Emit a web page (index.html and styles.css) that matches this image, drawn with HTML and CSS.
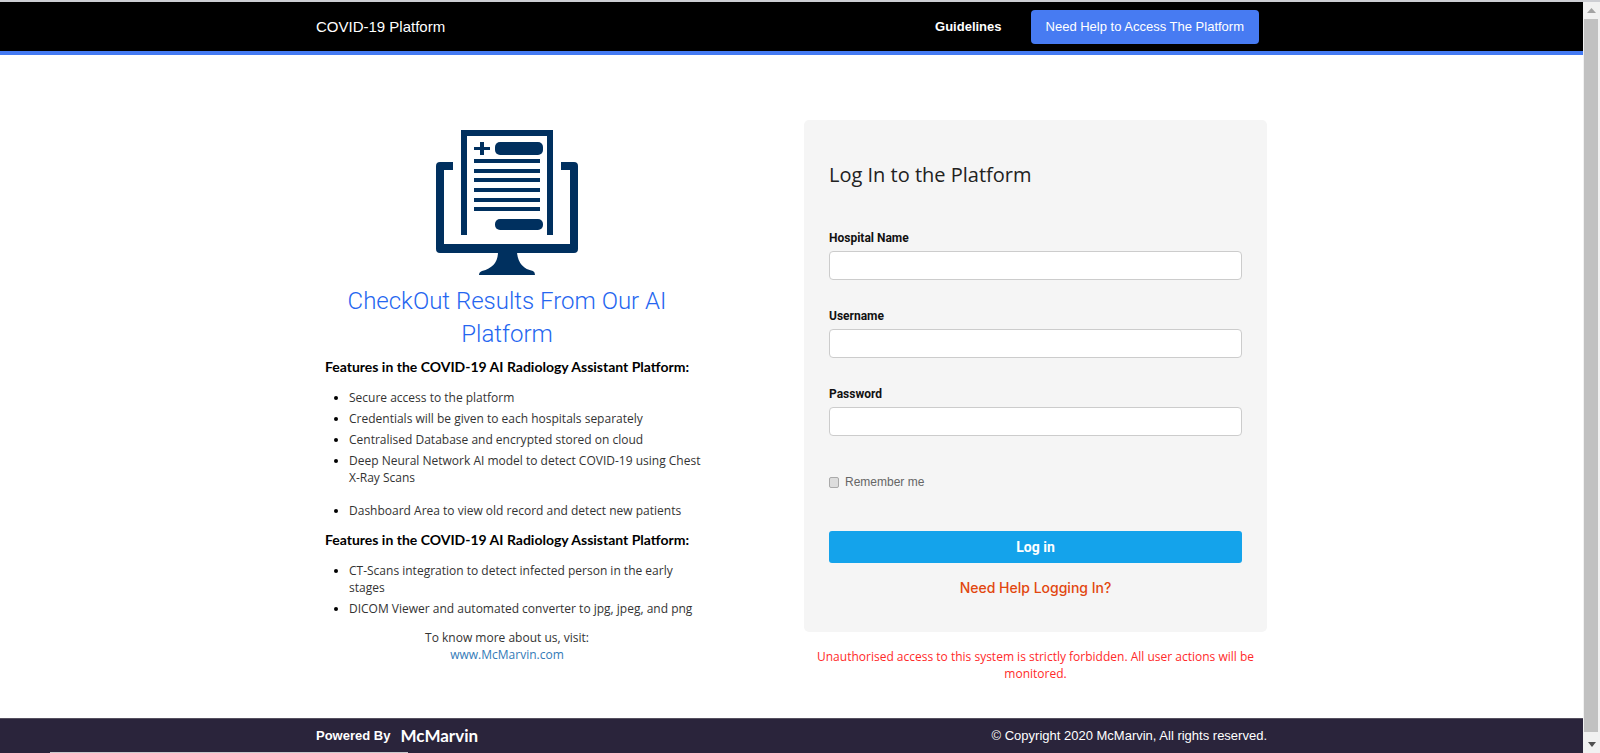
FILE: index.html
```html
<!DOCTYPE html>
<html lang="en">
<head>
<meta charset="utf-8">
<meta name="viewport" content="width=device-width, initial-scale=1">
<title>COVID-19 Platform</title>
<link rel="stylesheet" href="styles.css">
</head>
<body>
<div class="shell">
  <div class="page">
    <header class="header">
      <div class="container bar">
        <a class="brand" href="#">COVID-19 Platform</a>
        <nav class="nav">
          <a class="nav-link" href="#">Guidelines</a>
          <a class="nav-button" href="#">Need Help to Access The Platform</a>
        </nav>
      </div>
    </header>
    <main class="container columns">
      <section class="intro">
        <svg class="monitor" viewBox="0 0 142 145" width="142" height="145" aria-hidden="true">
          <g fill="#00305f">
            <path d="M17 32v8H8v74h126V40h-9v-8h13q4 0 4 4v83q0 4-4 4H4q-4 0-4-4V36q0-4 4-4z"/>
            <path d="M25 0h92v105h-6V6H31v99h-6z"/>
            <path d="M44 12h4v5h6v3h-6v5h-4v-5h-6v-3h6z"/>
            <rect x="59" y="12" width="48" height="13" rx="5"/>
            <rect x="38" y="29" width="66" height="4"/>
            <rect x="38" y="39" width="66" height="4"/>
            <rect x="38" y="48" width="66" height="4"/>
            <rect x="38" y="58" width="66" height="4"/>
            <rect x="38" y="68" width="66" height="4"/>
            <rect x="38" y="77" width="66" height="4"/>
            <rect x="59" y="89" width="48" height="11" rx="5"/>
            <path d="M62 122h19q1 16 16 19q2 1 2 4H43q0-3 3-4q16-4 16-19z"/>
          </g>
        </svg>
        <h1 class="title">CheckOut Results From Our AI Platform</h1>
        <h2 class="subtitle">Features in the COVID-19 AI Radiology Assistant Platform:</h2>
        <ul class="features">
          <li>Secure access to the platform</li>
          <li>Credentials will be given to each hospitals separately</li>
          <li>Centralised Database and encrypted stored on cloud</li>
          <li class="spaced">Deep Neural Network AI model to detect COVID-19 using Chest X-Ray Scans</li>
          <li>Dashboard Area to view old record and detect new patients</li>
        </ul>
        <h2 class="subtitle">Features in the COVID-19 AI Radiology Assistant Platform:</h2>
        <ul class="features">
          <li>CT-Scans integration to detect infected person in the early stages</li>
          <li>DICOM Viewer and automated converter to jpg, jpeg, and png</li>
        </ul>
        <p class="more">To know more about us, visit:<br><a href="#">www.McMarvin.com</a></p>
      </section>
      <section class="login">
        <form class="card">
          <h2 class="card-title">Log In to the Platform</h2>
          <div class="field">
            <label for="hospital">Hospital Name</label>
            <input id="hospital" type="text">
          </div>
          <div class="field">
            <label for="username">Username</label>
            <input id="username" type="text">
          </div>
          <div class="field">
            <label for="password">Password</label>
            <input id="password" type="password">
          </div>
          <div class="remember">
            <input id="remember" type="checkbox">
            <label for="remember">Remember me</label>
          </div>
          <button class="submit" type="button">Log in</button>
          <a class="help" href="#">Need Help Logging In?</a>
        </form>
        <p class="warning">Unauthorised access to this system is strictly forbidden. All user actions will be monitored.</p>
      </section>
    </main>
    <footer class="footer">
      <div class="container bar">
        <p class="powered">Powered By <span class="logo">McMarvin</span></p>
        <p class="copyright">© Copyright 2020 McMarvin, All rights reserved.</p>
      </div>
    </footer>
  </div>
  <div class="scrollbar" aria-hidden="true">
    <svg viewBox="0 0 17 17" width="17" height="17"><path d="M4 11l4.500-5l4.500 5z" fill="#a3a3a3"/></svg>
    <div class="thumb"></div>
    <svg viewBox="0 0 17 17" width="17" height="17"><path d="M5 6h8l-4 5z" fill="#505050"/></svg>
  </div>
</div>
</body>
</html>
```
FILE: styles.css
```css
* { box-sizing: border-box; }
body {
  margin: 0;
  background: #fff;
  color: #333;
  font-family: "Open Sans", sans-serif;
  font-size: 12px;
  line-height: 17px;
}
h1, h2, p, ul { margin: 0; padding: 0; }
a { text-decoration: none; }
.shell {
  display: flex;
  min-height: 100vh;
  border-top: 2px solid #cdced3;
}
.page {
  flex: 1;
  display: flex;
  flex-direction: column;
}
.container {
  width: 100%;
  max-width: 951px;
  margin: 0 auto;
}
.bar {
  display: flex;
  align-items: center;
  justify-content: space-between;
}
.header {
  background: #000;
  border-bottom: 4px solid #447af2;
  font: 15px/20px "Liberation Sans", Arial, sans-serif;
}
.header .bar { min-height: 49px; }
.header a { color: #fff; }
.nav {
  display: flex;
  align-items: center;
  gap: 29px;
  padding-right: 8px;
  font-size: 13px;
}
.nav-link { font-weight: bold; }
.nav-button {
  padding: 7px 15px;
  border-radius: 4px;
  background: #477bf2;
}
.columns {
  flex: 1;
  display: flex;
  justify-content: space-between;
  align-items: flex-start;
  padding-top: 65px;
}
.intro {
  width: 382px;
  padding-top: 10px;
}
.monitor { display: block; margin: 0 auto; }
.title {
  margin-top: 10px;
  color: #2566f0;
  font: 300 24px/33px Roboto, sans-serif;
  text-align: center;
}
.subtitle {
  margin-top: 7px;
  color: #000;
  font: 700 14px/18px Lato, sans-serif;
  text-align: center;
}
.features {
  margin: 13px -8px 12px 0;
  padding-left: 33px;
}
.features li { margin-bottom: 4px; }
.features li::marker { color: #000; }
.features .spaced { margin-bottom: 16px; }
.more { text-align: center; }
.more a { color: #337ab7; }
.login { width: 463px; }
.card {
  display: flex;
  flex-direction: column;
  padding: 41px 25px 35px;
  border-radius: 5px;
  background: #f5f5f5;
}
.card-title {
  margin-bottom: 41px;
  color: #222;
  font: 400 20px/28px "Open Sans", sans-serif;
}
.field {
  display: flex;
  flex-direction: column;
  gap: 4px;
  margin-bottom: 28px;
}
.field label {
  color: #111;
  font: 700 12px/17px Roboto, sans-serif;
}
.field input {
  height: 29px;
  padding: 4px 8px;
  border: 1px solid #ccc;
  border-radius: 4px;
  background: #fff;
}
.remember {
  display: flex;
  align-items: center;
  gap: 6px;
  margin: 9px 0 40px;
  color: #666;
  font: 12px/18px "Liberation Sans", Arial, sans-serif;
}
.remember input {
  appearance: none;
  width: 10px;
  height: 11px;
  margin: 0;
  border: 1px solid #aaa;
  border-radius: 2px;
  background: #ddd;
}
.submit {
  height: 32px;
  border: 0;
  border-radius: 3px;
  background: #14a3eb;
  color: #fff;
  font: 700 14px/20px Roboto, sans-serif;
}
.help {
  align-self: center;
  margin-top: 16px;
  color: #e2470f;
  font: 500 14px/18px Inter, sans-serif;
}
.warning {
  margin-top: 16px;
  color: #ff2a2a;
  text-align: center;
}
.footer {
  background: linear-gradient(90deg, transparent 50px, #c8c8cc 50px, #c8c8cc 408px, transparent 408px) bottom / 100% 1px no-repeat #2a243b;
  border-top: 1px solid #55505f;
  color: #fff;
  font: 13px/20px "Liberation Sans", Arial, sans-serif;
}
.footer .bar { min-height: 34px; }
.powered {
  display: flex;
  align-items: center;
  gap: 10px;
  font-size: 13px;
  font-weight: bold;
}
.logo { font: 700 17px/20px Lato, sans-serif; }
.scrollbar {
  display: flex;
  flex-direction: column;
  width: 17px;
  background: #f1f1f1;
}
.scrollbar svg { display: block; }
.thumb {
  flex: 1;
  margin: 0 2px 4px 1px;
  background: #c1c1c1;
}
```
